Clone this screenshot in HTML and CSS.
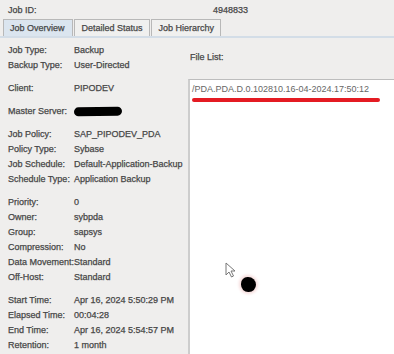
FILE: index.html
```html
<!DOCTYPE html>
<html lang="en">
<head>
    <meta charset="UTF-8">
    <title>Job Details</title>
    <link rel="stylesheet" href="styles.css">
</head>
<body>
    <div class="window">
        <div class="topbar">
            <span class="top-label">Job ID:</span>
            <span class="top-value">4948833</span>
        </div>

        <div class="tabs">
            <div class="tab active">Job Overview</div>
            <div class="tab">Detailed Status</div>
            <div class="tab">Job Hierarchy</div>
        </div>

        <div class="panel">
            <div class="details">
                <div class="group">
                    <div class="row"><span class="label">Job Type:</span><span class="value">Backup</span></div>
                    <div class="row"><span class="label">Backup Type:</span><span class="value">User-Directed</span></div>
                </div>
                <div class="group">
                    <div class="row"><span class="label">Client:</span><span class="value">PIPODEV</span></div>
                </div>
                <div class="group">
                    <div class="row"><span class="label">Master Server:</span><span class="value"><span class="redact"></span></span></div>
                </div>
                <div class="group">
                    <div class="row"><span class="label">Job Policy:</span><span class="value">SAP_PIPODEV_PDA</span></div>
                    <div class="row"><span class="label">Policy Type:</span><span class="value">Sybase</span></div>
                    <div class="row"><span class="label">Job Schedule:</span><span class="value">Default-Application-Backup</span></div>
                    <div class="row"><span class="label">Schedule Type:</span><span class="value">Application Backup</span></div>
                </div>
                <div class="group">
                    <div class="row"><span class="label">Priority:</span><span class="value">0</span></div>
                    <div class="row"><span class="label">Owner:</span><span class="value">sybpda</span></div>
                    <div class="row"><span class="label">Group:</span><span class="value">sapsys</span></div>
                    <div class="row"><span class="label">Compression:</span><span class="value">No</span></div>
                    <div class="row"><span class="label">Data Movement:</span><span class="value">Standard</span></div>
                    <div class="row"><span class="label">Off-Host:</span><span class="value">Standard</span></div>
                </div>
                <div class="group">
                    <div class="row"><span class="label">Start Time:</span><span class="value">Apr 16, 2024 5:50:29 PM</span></div>
                    <div class="row"><span class="label">Elapsed Time:</span><span class="value">00:04:28</span></div>
                    <div class="row"><span class="label">End Time:</span><span class="value">Apr 16, 2024 5:54:57 PM</span></div>
                    <div class="row"><span class="label">Retention:</span><span class="value">1 month</span></div>
                </div>
            </div>

            <div class="files">
                <div class="files-title">File List:</div>
                <div class="file-box">
                    <div class="file-item">/PDA.PDA.D.0.102810.16-04-2024.17:50:12</div>
                    <div class="underline"></div>
                    <svg class="cursor" width="12" height="16" viewBox="0 0 12 16">
                        <path d="M1 1 L1 13 L4 10 L6.5 15 L8.5 14 L6 9 L10 9 Z" fill="#fff" stroke="#777" stroke-width="1"/>
                    </svg>
                    <div class="blob"></div>
                </div>
            </div>
        </div>
    </div>
</body>
</html>
```

FILE: styles.css
```css
:root {
    --bg-color: #efeeed;
    --text-color: #474747;
    --border: #b8b8b8;
    --tab-active: #dbe5ef;
}

body {
    margin: 0;
    background: var(--bg-color);
    font-family: "Liberation Sans", Arial, sans-serif;
    font-size: 9px;
    color: var(--text-color);
    -webkit-text-stroke: 0.25px;
}

.window {
    width: 394px;
    height: 354px;
    overflow: hidden;
    display: flex;
    flex-direction: column;
}

.topbar {
    display: flex;
    height: 19px;
    align-items: center;
    padding-left: 8px;
}

.top-label {
    width: 205px;
}

.tabs {
    display: flex;
    padding-left: 3px;
    gap: 1px;
    height: 17px;
}

.tab {
    padding: 0 6px 0 7px;
    border: 1px solid var(--border);
    border-bottom: none;
    background: #f0f0ef;
    display: flex;
    align-items: center;
}

.tab.active {
    background: var(--tab-active);
    padding: 0 7px 0 6px;
}

.panel {
    flex: 1;
    display: grid;
    grid-template-columns: 188px 1fr;
    border-top: 2px solid #d3dde7;
    min-height: 0;
}

.details {
    padding: 4px 0 0 8px;
}

.group + .group {
    margin-top: 8px;
}

.row {
    display: grid;
    grid-template-columns: 66px 1fr;
    height: 15px;
    align-items: center;
    white-space: nowrap;
}

.redact {
    display: inline-block;
    width: 48px;
    height: 9px;
    background: #000;
    border-radius: 5px;
    vertical-align: middle;
    transform: rotate(-1deg);
}

.files {
    display: flex;
    flex-direction: column;
    min-height: 0;
}

.files-title {
    padding: 14px 0 0 2px;
    height: 27px;
    box-sizing: border-box;
}

.file-box {
    flex: 1;
    position: relative;
    background: #ffffff;
    border-left: 2px solid #cdcdcd;
    border-top: 1px solid #bdbdbd;
    margin-top: 14px;
    padding: 4px 0 0 2px;
}

.file-item {
    font-size: 9px;
    color: #666;
    -webkit-text-stroke: 0;
}

.underline {
    height: 4px;
    width: 188px;
    margin: 4px 0 0 0;
    background: #e41b23;
    border-radius: 2px;
}

.cursor {
    position: absolute;
    left: 35px;
    top: 182px;
}

.blob {
    position: absolute;
    left: 51px;
    top: 197px;
    width: 15px;
    height: 15px;
    background: #000;
    border-radius: 45% 55% 50% 50%;
    box-shadow: 0 0 3px 2px #f6dcdc;
}
```
